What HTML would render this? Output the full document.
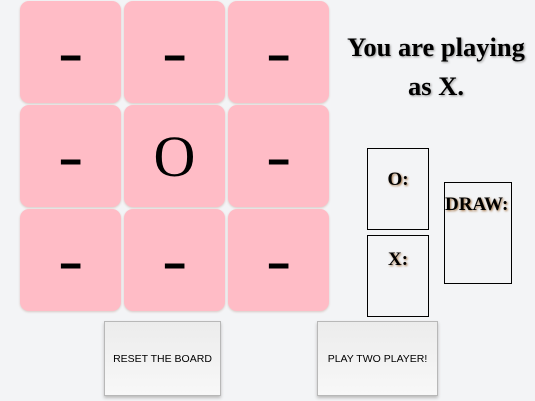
<!DOCTYPE html>
<html><head><style>
body{margin:0;width:535px;height:401px;background:#f3f4f6;position:relative;overflow:hidden;font-family:"Liberation Serif",serif}
.c{position:absolute;width:101px;height:102px;background:#ffbcc6;border-radius:9px;box-shadow:0 1px 2px #d8c8c4;display:flex;align-items:center;justify-content:center;font-size:58px;color:#000;font-weight:bold}
.c span{display:inline-block;transform:scaleX(1.3)}
.o{font-weight:normal}
.b{position:absolute;border:1px solid #000;box-sizing:border-box;text-align:center;font-weight:bold;font-size:19px;text-shadow:1px 1px 2px #a07040;white-space:nowrap}
.btn{position:absolute;height:75px;background:linear-gradient(#ececec,#f8f8f8);border:1px solid #b8b8b8;box-sizing:border-box;box-shadow:0 2px 3px #bbb;font-family:"Liberation Sans",sans-serif;font-size:10.5px;display:flex;align-items:center;justify-content:center}
h1{position:absolute;left:326px;top:28px;width:220px;margin:0;text-align:center;font-size:26.5px;line-height:39px;font-weight:bold;text-shadow:1px 1px 2px #999}
</style></head><body>
<div class="c" style="left:20px;top:1px"><span>-</span></div>
<div class="c" style="left:124px;top:1px"><span>-</span></div>
<div class="c" style="left:228px;top:1px"><span>-</span></div>
<div class="c" style="left:20px;top:105px"><span>-</span></div>
<div class="c o" style="left:124px;top:105px">O</div>
<div class="c" style="left:228px;top:105px"><span>-</span></div>
<div class="c" style="left:20px;top:209px"><span>-</span></div>
<div class="c" style="left:124px;top:209px"><span>-</span></div>
<div class="c" style="left:228px;top:209px"><span>-</span></div>
<h1>You are playing<br>as X.</h1>
<div class="b" style="left:367px;top:148px;width:62px;height:82px;padding-top:20px">O:</div>
<div class="b" style="left:367px;top:235px;width:62px;height:82px;padding-top:13px">X:</div>
<div class="b" style="left:444px;top:182px;width:68px;height:102px;padding-top:11px;text-align:left">DRAW:</div>
<div class="btn" style="left:104px;top:321px;width:117px">RESET THE BOARD</div>
<div class="btn" style="left:317px;top:321px;width:121px">PLAY TWO PLAYER!</div>
</body></html>
